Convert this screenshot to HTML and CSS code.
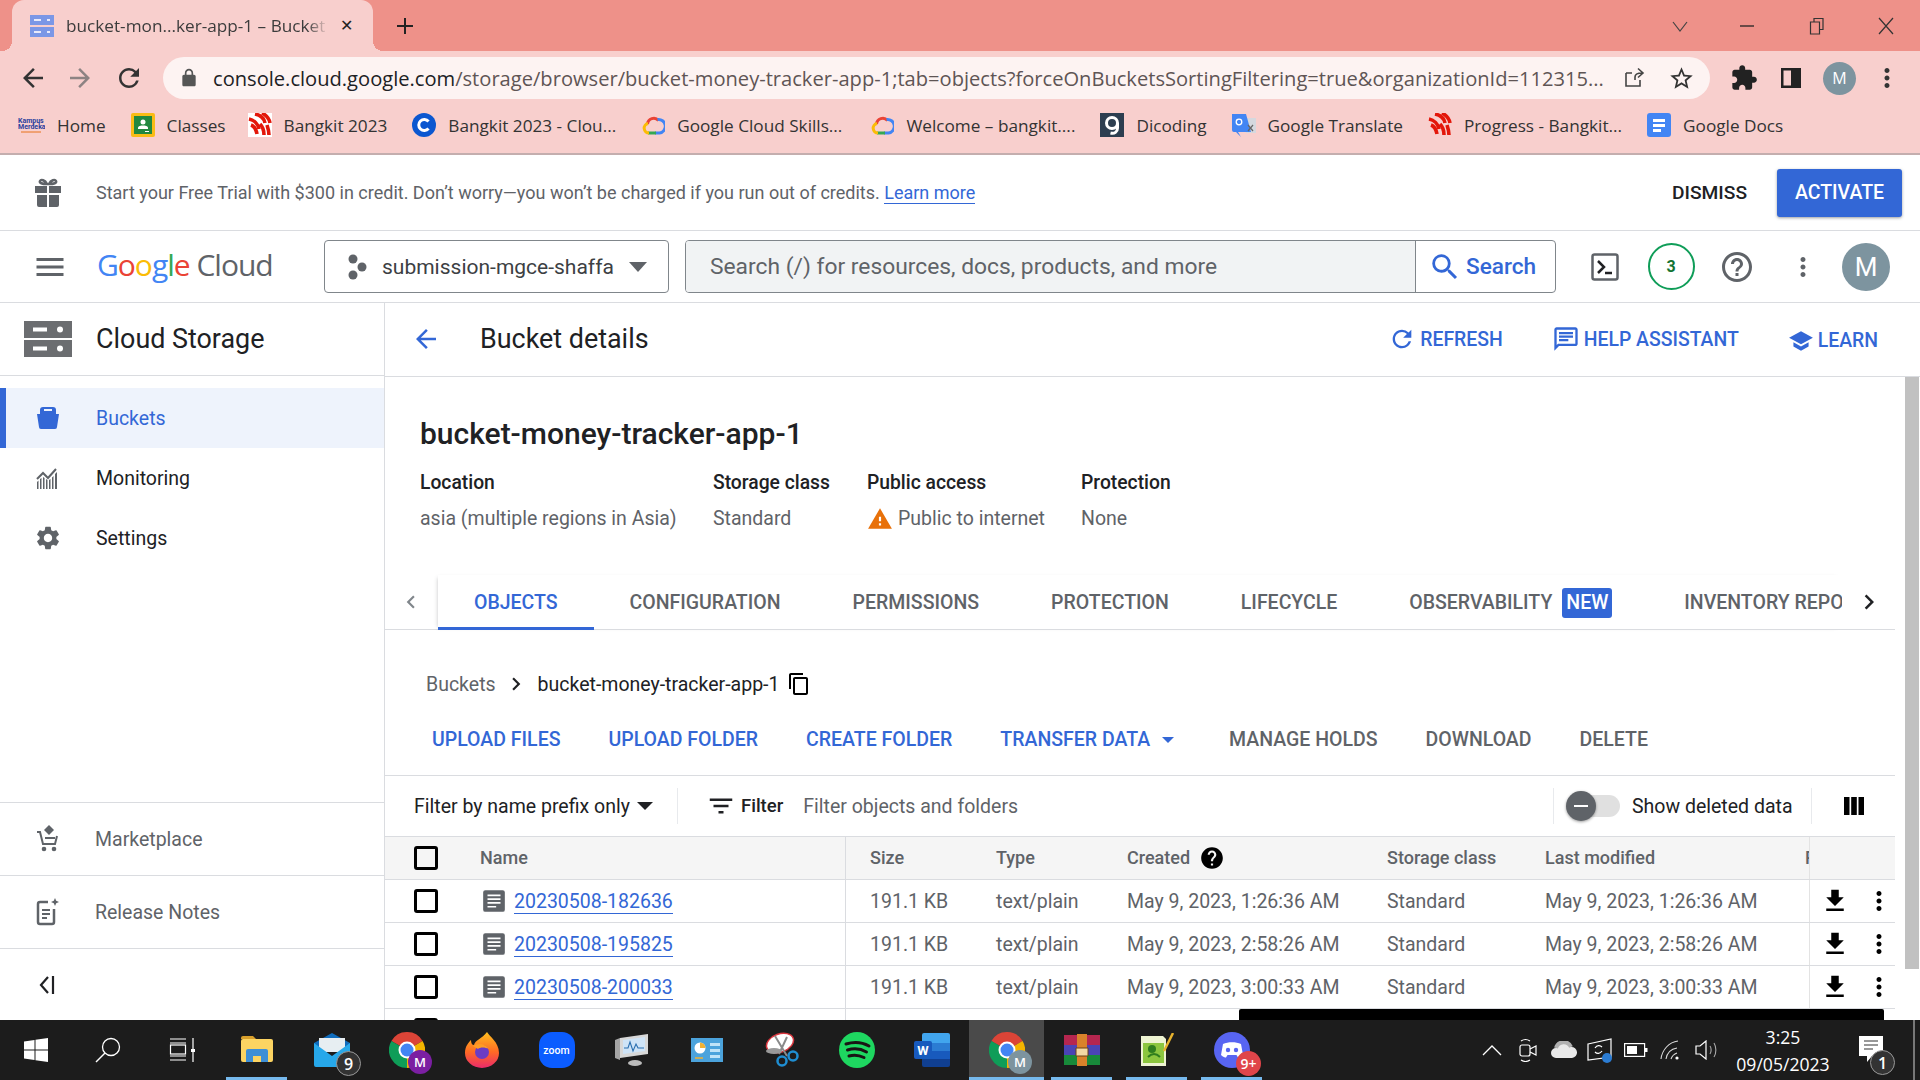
FILE: index.html
```html
<!DOCTYPE html>
<html lang="en">
<head>
    <meta charset="UTF-8">
    <title>bucket-money-tracker-app-1 – Bucket details</title>
    <link rel="stylesheet" href="styles.css">
</head>
<body>
    <svg class="defs" width="0" height="0">
        <defs>
            <symbol id="i-back" viewBox="0 0 24 24"><path d="M20 11H7.83l5.59-5.59L12 4l-8 8 8 8 1.41-1.41L7.83 13H20v-2z"/></symbol>
            <symbol id="i-more" viewBox="0 0 24 24"><path d="M12 8c1.1 0 2-.9 2-2s-.9-2-2-2-2 .9-2 2 .9 2 2 2zm0 2c-1.1 0-2 .9-2 2s.9 2 2 2 2-.9 2-2-.9-2-2-2zm0 6c-1.1 0-2 .9-2 2s.9 2 2 2 2-.9 2-2-.9-2-2-2z"/></symbol>
            <symbol id="i-refresh" viewBox="0 0 24 24"><path d="M17.65 6.35A7.958 7.958 0 0 0 12 4c-4.42 0-7.99 3.58-7.99 8s3.57 8 7.99 8c3.73 0 6.84-2.55 7.73-6h-2.08A5.99 5.99 0 0 1 12 18c-3.31 0-6-2.69-6-6s2.69-6 6-6c1.66 0 3.14.69 4.22 1.78L13 11h7V4l-2.35 2.35z"/></symbol>
            <symbol id="i-download" viewBox="0 0 24 24"><path d="M19 9h-4V3H9v6H5l7 7 7-7zM5 18v2h14v-2H5z"/></symbol>
            <symbol id="i-doc" viewBox="0 0 24 24"><path fill-rule="evenodd" d="M4 2h16a2 2 0 0 1 2 2v16a2 2 0 0 1-2 2H4a2 2 0 0 1-2-2V4a2 2 0 0 1 2-2zm2 4v1.500h12V6H6zm0 3.500V11h12V9.500H6zm0 3.500v1.500h12V13H6zm0 3.500V18h8v-1.500H6z" fill="#5f6368"/></symbol>
            <symbol id="i-chevron-right" viewBox="0 0 24 24"><path d="M10 6L8.59 7.41 13.17 12l-4.58 4.59L10 18l6-6z"/></symbol>
            <symbol id="i-chevron-left" viewBox="0 0 24 24"><path d="M15.41 7.41L14 6l-6 6 6 6 1.41-1.41L10.83 12z"/></symbol>
            <symbol id="i-storage" viewBox="0 0 48 36"><path fill="#6b6d70" d="M0 0h48v17H0zM0 19h48v17H0z"/><path fill="#fff" d="M9 6.500h14v4H9zM9 25.500h14v4H9z"/><circle cx="36" cy="8.500" r="3" fill="#fff"/><circle cx="36" cy="27.500" r="3" fill="#fff"/></symbol>
            <symbol id="i-cloud" viewBox="0 0 24 24"><g fill="none" stroke-width="3"><path stroke="#ea4335" d="M6.5 11a6.3 6.3 0 0 1 11-3.5"/><path stroke="#4285f4" d="M16.5 6.500a6.800 6.800 0 0 1 2 13.500H14"/><path stroke="#34a853" d="M15 20H7"/><path stroke="#fbbc05" d="M8 20a4.800 4.800 0 0 1-1-9.500"/></g></symbol>
            <symbol id="i-stripes" viewBox="0 0 24 24"><g fill="none" stroke="#e3170a" stroke-width="3.600"><path d="M7 1c5 1 9 4 10 9"/><path d="M14 0c4 2 7 5 8 10"/><path d="M1 6c5 1 9 5 10 10"/><path d="M3 12c3 1 5 4 6 9"/><path d="M12 11c2 2 4 6 4 11"/><path d="M19 12c1 3 2 6 2 10"/></g></symbol>
            <symbol id="i-chrome" viewBox="0 0 36 36"><path fill="#db4437" d="M18 18L2.410 9A18 18 0 0 1 33.590 9Z"/><path fill="#f4b400" d="M18 18L33.590 9A18 18 0 0 1 18 36Z"/><path fill="#0f9d58" d="M18 18L18 36A18 18 0 0 1 2.410 9Z"/><circle cx="18" cy="18" r="8.500" fill="#fff"/><circle cx="18" cy="18" r="6.500" fill="#4285f4"/></symbol>
        </defs>
    </svg>

    <div class="browser">
        <div class="tabstrip">
            <div class="browser-tab">
                <svg class="tab-favicon" width="24" height="24" viewBox="0 0 24 24"><path fill="#7b97e6" d="M0 1h24v10H0zM0 13h24v10H0z"/><path fill="#e8eafa" d="M4 5h7v2H4zM4 17h7v2H4zM17 5h3v2h-3zM17 17h3v2h-3z"/></svg>
                <span class="tab-title">bucket-mon...ker-app-1 – Bucket</span>
                <span class="tab-close">✕</span>
            </div>
            <svg class="new-tab" width="24" height="24" viewBox="0 0 24 24"><path d="M4 11h7V4h2v7h7v2h-7v7h-2v-7H4z"/></svg>
            <div class="window-controls">
                <svg class="win-chevron" width="18" height="18" viewBox="0 0 18 18"><path d="M2 5l7 9 7-9" fill="none" stroke="#444" stroke-width="1.200"/></svg>
                <svg class="win-min" width="18" height="18" viewBox="0 0 18 18"><path d="M2 9h14" stroke="#222" stroke-width="1.300"/></svg>
                <svg class="win-max" width="18" height="18" viewBox="0 0 18 18"><path d="M2.500 5h9v12h-9zM6 5V1.500h9v11h-3.500" fill="none" stroke="#333" stroke-width="1.200"/></svg>
                <svg class="win-close" width="18" height="18" viewBox="0 0 18 18"><path d="M2 1l14 16M16 1L2 17" stroke="#333" stroke-width="1.200"/></svg>
            </div>
        </div>

        <div class="toolbar">
            <svg class="nav-btn back" width="30" height="30"><use href="#i-back"/></svg>
            <svg class="nav-btn forward" width="30" height="30" viewBox="0 0 24 24"><path d="M12 4l-1.410 1.410L16.170 11H4v2h12.170l-5.580 5.590L12 20l8-8z"/></svg>
            <svg class="nav-btn reload" width="30" height="30"><use href="#i-refresh"/></svg>
            <div class="omnibox">
                <svg class="lock" width="20" height="20" viewBox="0 0 24 24"><path d="M18 8h-1V6c0-2.760-2.240-5-5-5S7 3.240 7 6v2H6c-1.100 0-2 .9-2 2v10c0 1.100.9 2 2 2h12c1.100 0 2-.9 2-2V10c0-1.100-.9-2-2-2zM9 6c0-1.660 1.340-3 3-3s3 1.340 3 3v2H9V6z"/></svg>
                <span class="url"><span class="host">console.cloud.google.com</span>/storage/browser/bucket-money-tracker-app-1;tab=objects?forceOnBucketsSortingFiltering=true&amp;organizationId=112315...</span>
                <svg class="share" width="24" height="24" viewBox="0 0 24 24"><path d="M4 7h6M4 7v13h14v-6M13 14v-3c0-3 3-4 7-4M16 2.500L21 7l-5 4.500" fill="none" stroke="#444" stroke-width="1.600"/></svg>
                <svg class="star" width="27" height="27" viewBox="0 0 24 24"><path d="M22 9.240l-7.190-.62L12 2 9.190 8.630 2 9.240l5.460 4.730L5.820 21 12 17.270 18.180 21l-1.630-7.030L22 9.240zM12 15.400l-3.760 2.270 1-4.280-3.320-2.880 4.380-.38L12 6.100l1.710 4.040 4.380.38-3.320 2.880 1 4.280L12 15.400z"/></svg>
            </div>
            <svg class="ext" width="28" height="28" viewBox="0 0 24 24"><path d="M20.500 11H19V7c0-1.100-.9-2-2-2h-4V3.500C13 2.120 11.880 1 10.500 1S8 2.120 8 3.500V5H4c-1.100 0-1.990.9-1.990 2v3.800H3.500c1.490 0 2.700 1.210 2.700 2.700s-1.210 2.700-2.700 2.700H2V20c0 1.100.9 2 2 2h3.800v-1.500c0-1.490 1.210-2.700 2.700-2.700 1.490 0 2.700 1.210 2.700 2.700V22H17c1.100 0 2-.9 2-2v-4h1.500c1.380 0 2.500-1.120 2.500-2.500S21.880 11 20.500 11z"/></svg>
            <svg class="sidepanel" width="22" height="22" viewBox="0 0 22 22"><path fill-rule="evenodd" d="M1 1h20v20H1zM3.500 3.500v15H11v-15z"/></svg>
            <span class="chrome-avatar">M</span>
            <svg class="chrome-menu" width="30" height="30"><use href="#i-more"/></svg>
        </div>

        <div class="bookmarks">
            <div class="bookmark"><svg width="27" height="24" viewBox="0 0 27 24"><text x="0" y="10" class="km-logo">Kampus</text><text x="0" y="16" class="km-logo">Merdeka</text><path d="M3 19h20" stroke="#e8731a" stroke-width="1"/></svg><span>Home</span></div>
            <div class="bookmark tight"><svg width="24" height="24" viewBox="0 0 24 24"><rect width="24" height="24" rx="2" fill="#f9bc15"/><rect x="3" y="3" width="18" height="18" fill="#22883f"/><circle cx="12" cy="9" r="2.500" fill="#fff"/><path d="M7 15c0-2 3-2.500 5-2.500s5 .5 5 2.500v1H7z" fill="#fff"/><path d="M14 18h4v1h-4z" fill="#fff"/></svg><span>Classes</span></div>
            <div class="bookmark"><svg width="24" height="24" viewBox="0 0 24 24"><rect width="24" height="24" fill="#fff"/><use href="#i-stripes"/></svg><span>Bangkit 2023</span></div>
            <div class="bookmark"><svg width="24" height="24" viewBox="0 0 24 24"><circle cx="12" cy="12" r="12" fill="#0b57d0"/><path d="M16.500 8.500a5.500 5.500 0 1 0 0 7" fill="none" stroke="#fff" stroke-width="3"/></svg><span>Bangkit 2023 - Clou...</span></div>
            <div class="bookmark loose"><svg width="24" height="24"><use href="#i-cloud"/></svg><span>Google Cloud Skills...</span></div>
            <div class="bookmark"><svg width="24" height="24"><use href="#i-cloud"/></svg><span>Welcome – bangkit....</span></div>
            <div class="bookmark"><svg width="24" height="24" viewBox="0 0 24 24"><rect width="24" height="24" fill="#2d3e50"/><circle cx="12" cy="10" r="5.500" fill="none" stroke="#fff" stroke-width="3"/><path d="M17.500 10v5c0 4-3 6-7 5" fill="none" stroke="#fff" stroke-width="3"/></svg><span>Dicoding</span></div>
            <div class="bookmark"><svg width="24" height="24" viewBox="0 0 24 24"><path d="M10 5h14v15H14z" fill="#d5d8de"/><path d="M0 1h14l5 18H6l3 5-5-5H2a2 2 0 0 1-2-2z" fill="#4285f4"/><circle cx="7" cy="9" r="2.800" fill="none" stroke="#fff" stroke-width="1.300"/><path d="M16 12l5 6M21 12l-5 6" stroke="#666" stroke-width="1.200"/></svg><span>Google Translate</span></div>
            <div class="bookmark"><svg width="24" height="24"><use href="#i-stripes"/></svg><span>Progress - Bangkit...</span></div>
            <div class="bookmark"><svg width="24" height="24" viewBox="0 0 24 24"><rect width="24" height="24" rx="3" fill="#4285f4"/><path d="M6 6h12v3H6zM6 11h12v3H6zM6 16h8v3H6z" fill="#fff"/></svg><span>Google Docs</span></div>
        </div>
    </div>

    <div class="banner">
        <svg class="gift" width="32" height="32" viewBox="0 0 32 32"><path fill="#5f6368" d="M3 9h12v7H3zM17 9h12v7H17zM5 18h10v12H7a2 2 0 0 1-2-2zM17 18h10v10a2 2 0 0 1-2 2h-8z"/><path fill="none" stroke="#5f6368" stroke-width="2.500" d="M15 7c-2-4-6-5-7-3s2 3 7 3zM17 7c2-4 6-5 7-3s-2 3-7 3z"/></svg>
        <p class="banner-text">Start your Free Trial with $300 in credit. Don’t worry—you won’t be charged if you run out of credits. <a class="underlined">Learn more</a></p>
        <span class="dismiss">DISMISS</span>
        <span class="activate">ACTIVATE</span>
    </div>

    <header class="console-header">
        <svg class="menu-icon" width="36" height="36" viewBox="0 0 24 24"><path d="M3 18h18v-2H3v2zm0-5h18v-2H3v2zm0-7v2h18V6H3z"/></svg>
        <div class="logo"><span class="g-blue">G</span><span class="g-red">o</span><span class="g-yellow">o</span><span class="g-blue">g</span><span class="g-green">l</span><span class="g-red">e</span> <span class="logo-cloud">Cloud</span></div>
        <div class="project">
            <svg width="24" height="26" viewBox="0 0 24 26"><circle cx="8" cy="5" r="4.500"/><circle cx="17" cy="13" r="4.500"/><circle cx="8" cy="21" r="4.500"/></svg>
            <span class="project-name">submission-mgce-shaffa</span>
            <span class="caret"></span>
        </div>
        <div class="search">
            <span class="search-input">Search (/) for resources, docs, products, and more</span>
            <span class="search-btn">
                <svg width="34" height="34" viewBox="0 0 24 24"><path d="M15.500 14h-.79l-.28-.27A6.471 6.471 0 0 0 16 9.500 6.500 6.500 0 1 0 9.500 16c1.610 0 3.090-.59 4.230-1.570l.27.28v.79l5 4.990L20.490 19l-4.990-5zm-6 0C7.010 14 5 11.990 5 9.500S7.010 5 9.500 5 14 7.010 14 9.500 11.990 14 9.500 14z"/></svg>
                Search
            </span>
        </div>
        <div class="header-icons">
            <span class="header-icon"><svg width="30" height="30" viewBox="0 0 30 30"><rect x="2.500" y="2.500" width="25" height="25" rx="2" fill="none" stroke="#5f6368" stroke-width="2.500"/><path d="M8 9l6 6-6 6" fill="none" stroke="#202124" stroke-width="2.500"/><path d="M15 21h7" stroke="#202124" stroke-width="2.500"/></svg></span>
            <span class="header-icon"><span class="notif">3</span></span>
            <span class="header-icon"><svg width="36" height="36" viewBox="0 0 24 24" fill="#5f6368"><path d="M11 18h2v-2h-2v2zm1-16C6.480 2 2 6.480 2 12s4.480 10 10 10 10-4.480 10-10S17.520 2 12 2zm0 18c-4.410 0-8-3.590-8-8s3.590-8 8-8 8 3.590 8 8-3.590 8-8 8zm0-14c-2.210 0-4 1.790-4 4h2c0-1.100.9-2 2-2s2 .9 2 2c0 2-3 1.750-3 5h2c0-2.250 3-2.500 3-5 0-2.210-1.790-4-4-4z"/></svg></span>
            <span class="header-icon"><svg width="30" height="30" fill="#5f6368"><use href="#i-more"/></svg></span>
            <span class="avatar">M</span>
        </div>
    </header>

    <div class="layout">
        <aside class="sidebar">
            <div class="side-title">
                <svg width="48" height="36"><use href="#i-storage"/></svg>
                <span>Cloud Storage</span>
            </div>
            <nav class="side-nav">
                <div class="side-item active">
                    <svg width="24" height="24" viewBox="0 0 24 24"><path d="M7 1h10a3 3 0 0 1 3 3v4H4V4a3 3 0 0 1 3-3z"/><path fill="#eef3fc" d="M8 3h8v2H8z"/><path d="M1 8h22l-2 13a2 2 0 0 1-2 2H5a2 2 0 0 1-2-2z"/></svg>
                    <span>Buckets</span>
                </div>
                <div class="side-item">
                    <svg width="24" height="24" viewBox="0 0 24 24"><path d="M1 23v-7l1.500-1.500V23zM4 23v-10l1.500-1V23zM7 23v-12l1.500 1V23zM10 23V13l1.500 1V23zM13 23v-9l1.500-1V23zM16 23V11.500l1.500-1.500V23zM19 23V8l2-2V23z"/><path d="M1 13l6-6 5 5 8-9" fill="none" stroke="#5f6368" stroke-width="2"/></svg>
                    <span>Monitoring</span>
                </div>
                <div class="side-item">
                    <svg width="28" height="28" viewBox="0 0 24 24"><path d="M19.140 12.940c.04-.3.06-.61.06-.94 0-.32-.02-.64-.07-.94l2.030-1.580a.49.49 0 0 0 .12-.61l-1.920-3.320a.488.488 0 0 0-.59-.22l-2.390.96c-.5-.38-1.030-.7-1.620-.94l-.36-2.540a.484.484 0 0 0-.48-.41h-3.840c-.24 0-.43.17-.47.41l-.36 2.540c-.59.24-1.130.57-1.620.94l-2.390-.96c-.22-.08-.47 0-.59.22L2.740 8.870c-.12.21-.08.47.12.61l2.030 1.580c-.05.3-.09.63-.09.94s.02.64.07.94l-2.030 1.580a.49.49 0 0 0-.12.61l1.920 3.320c.12.22.37.29.59.22l2.390-.96c.5.38 1.030.7 1.620.94l.36 2.540c.05.24.24.41.48.41h3.840c.24 0 .44-.17.47-.41l.36-2.540c.59-.24 1.130-.56 1.620-.94l2.390.96c.22.08.47 0 .59-.22l1.920-3.320c.12-.22.07-.47-.12-.61l-2.010-1.580zM12 15.600c-1.980 0-3.600-1.620-3.600-3.600s1.620-3.600 3.600-3.600 3.600 1.620 3.600 3.600-1.620 3.600-3.600 3.600z"/></svg>
                    <span>Settings</span>
                </div>
            </nav>
            <div class="side-foot">
                <div class="foot-item">
                    <svg width="24" height="28" viewBox="0 0 24 28"><path d="M13 0l5 5-5 5-5-5z"/><path d="M1 7h3l3 12h12l2-8" fill="none" stroke="#5f6368" stroke-width="2"/><circle cx="8" cy="24" r="2.300"/><circle cx="18" cy="24" r="2.300"/><path d="M9 12h10v2H9z"/></svg>
                    <span>Marketplace</span>
                </div>
                <div class="foot-item">
                    <svg width="24" height="28" viewBox="0 0 24 28"><path d="M12 4H4a2 2 0 0 0-2 2v18a2 2 0 0 0 2 2h12a2 2 0 0 0 2-2V11" fill="none" stroke="#5f6368" stroke-width="2.500"/><path d="M6 11h8v2H6zM6 15h8v2H6zM6 19h5v2H6zM19 0l1.200 2.800L23 4l-2.800 1.200L19 8l-1.200-2.800L15 4l2.800-1.200z"/></svg>
                    <span>Release Notes</span>
                </div>
                <div class="foot-item collapse">
                    <svg width="20" height="22" viewBox="0 0 20 22"><path d="M10 3L3 11l7 8" fill="none" stroke="#202124" stroke-width="2.200"/><path d="M15 2v18" stroke="#202124" stroke-width="2.200"/></svg>
                </div>
            </div>
        </aside>

        <main class="main">
            <div class="page-head">
                <svg class="head-back" width="30" height="30"><use href="#i-back"/></svg>
                <h2 class="page-title">Bucket details</h2>
                <div class="head-actions">
                    <span class="head-action"><svg width="28" height="28"><use href="#i-refresh"/></svg>REFRESH</span>
                    <span class="head-action"><svg width="28" height="28" viewBox="0 0 24 24"><path d="M20 2H4c-1.100 0-2 .9-2 2v18l4-4h14c1.100 0 2-.9 2-2V4c0-1.100-.9-2-2-2zm0 14H5.170L4 17.170V4h16v12zM6 12h8v2H6zm0-3h12v2H6zm0-3h12v2H6z"/></svg>HELP ASSISTANT</span>
                    <span class="head-action learn"><svg width="26" height="26" viewBox="0 0 24 24"><path d="M5 13.180v4L12 21l7-3.820v-4L12 17l-7-3.820zM12 3L1 9l11 6 11-6L12 3z"/></svg>LEARN</span>
                </div>
            </div>

            <div class="main-body">
                <div class="scroll">
                    <h1 class="bucket-name">bucket-money-tracker-app-1</h1>
                    <div class="meta">
                        <div class="meta-col col-location"><b>Location</b><span>asia (multiple regions in Asia)</span></div>
                        <div class="meta-col col-class"><b>Storage class</b><span>Standard</span></div>
                        <div class="meta-col col-access"><b>Public access</b><span class="public"><svg width="26" height="26" viewBox="0 0 24 24"><path fill="#e8710a" d="M1 21h22L12 2 1 21zm12-3h-2v-2h2v2zm0-4h-2v-4h2v4z"/></svg>Public to internet</span></div>
                        <div class="meta-col"><b>Protection</b><span>None</span></div>
                    </div>

                    <div class="tabs">
                        <span class="tab-arrow left"><svg width="26" height="26"><use href="#i-chevron-left"/></svg></span>
                        <div class="tab-list">
                            <span class="tab active">OBJECTS</span>
                            <span class="tab">CONFIGURATION</span>
                            <span class="tab">PERMISSIONS</span>
                            <span class="tab">PROTECTION</span>
                            <span class="tab">LIFECYCLE</span>
                            <span class="tab">OBSERVABILITY<em class="new-badge">NEW</em></span>
                            <span class="tab">INVENTORY REPORTS</span>
                        </div>
                        <span class="tab-arrow right"><svg width="30" height="30"><use href="#i-chevron-right"/></svg></span>
                    </div>

                    <div class="crumbs">
                        <span class="crumb-root">Buckets</span>
                        <svg width="26" height="26"><use href="#i-chevron-right"/></svg>
                        <span class="crumb-name">bucket-money-tracker-app-1</span>
                        <svg width="24" height="24" viewBox="0 0 24 24"><path d="M16 1H4c-1.100 0-2 .9-2 2v14h2V3h12V1zm3 4H8c-1.100 0-2 .9-2 2v14c0 1.100.9 2 2 2h11c1.100 0 2-.9 2-2V7c0-1.100-.9-2-2-2zm0 16H8V7h11v14z"/></svg>
                    </div>

                    <div class="actions">
                        <span class="action">UPLOAD FILES</span>
                        <span class="action">UPLOAD FOLDER</span>
                        <span class="action">CREATE FOLDER</span>
                        <span class="action transfer">TRANSFER DATA<i class="action-caret"></i></span>
                        <span class="action off">MANAGE HOLDS</span>
                        <span class="action off">DOWNLOAD</span>
                        <span class="action off">DELETE</span>
                    </div>

                    <div class="filter-bar">
                        <span class="prefix">Filter by name prefix only<i class="caret small"></i></span>
                        <span class="vsep"></span>
                        <svg class="filter-icon" width="30" height="30" viewBox="0 0 24 24"><path d="M10 18h4v-2h-4v2zM3 6v2h18V6H3zm3 7h12v-2H6v2z"/></svg>
                        <b class="filter-word">Filter</b>
                        <span class="filter-input">Filter objects and folders</span>
                        <span class="vsep"></span>
                        <span class="toggle"><span class="toggle-knob"></span></span>
                        <span class="toggle-label">Show deleted data</span>
                        <span class="vsep"></span>
                        <svg class="columns-icon" width="20" height="18" viewBox="0 0 20 18"><path d="M0 0h5.500v18H0zM7.200 0h5.600v18H7.200zM14.500 0H20v18h-5.500z"/></svg>
                    </div>

                    <div class="row row-head">
                        <div class="cell"><span class="checkbox"></span></div>
                        <div class="cell">Name</div>
                        <div class="cell sep">Size</div>
                        <div class="cell">Type</div>
                        <div class="cell">Created<svg class="created-help" width="26" height="26" viewBox="0 0 24 24"><path d="M12 2C6.480 2 2 6.480 2 12s4.480 10 10 10 10-4.480 10-10S17.520 2 12 2zm1 17h-2v-2h2v2zm2.070-7.750l-.9.92C13.450 12.900 13 13.500 13 15h-2v-.5c0-1.100.45-2.100 1.170-2.830l1.240-1.260c.37-.36.59-.86.59-1.410 0-1.100-.9-2-2-2s-2 .9-2 2H8c0-2.210 1.790-4 4-4s4 1.790 4 4c0 .88-.36 1.680-.93 2.250z"/></svg></div>
                        <div class="cell">Storage class</div>
                        <div class="cell">Last modified</div>
                        <div class="cell cut">Public access</div>
                        <div class="cell fixed"></div>
                    </div>
                    <div class="row">
                        <div class="cell"><span class="checkbox"></span></div>
                        <div class="cell name"><svg width="26" height="26"><use href="#i-doc"/></svg><a class="underlined">20230508-182636</a></div>
                        <div class="cell sep">191.1 KB</div>
                        <div class="cell">text/plain</div>
                        <div class="cell">May 9, 2023, 1:26:36 AM</div>
                        <div class="cell">Standard</div>
                        <div class="cell">May 9, 2023, 1:26:36 AM</div>
                        <div class="cell cut"></div>
                        <div class="cell fixed"><svg width="30" height="30"><use href="#i-download"/></svg><svg width="30" height="30"><use href="#i-more"/></svg></div>
                    </div>
                    <div class="row">
                        <div class="cell"><span class="checkbox"></span></div>
                        <div class="cell name"><svg width="26" height="26"><use href="#i-doc"/></svg><a class="underlined">20230508-195825</a></div>
                        <div class="cell sep">191.1 KB</div>
                        <div class="cell">text/plain</div>
                        <div class="cell">May 9, 2023, 2:58:26 AM</div>
                        <div class="cell">Standard</div>
                        <div class="cell">May 9, 2023, 2:58:26 AM</div>
                        <div class="cell cut"></div>
                        <div class="cell fixed"><svg width="30" height="30"><use href="#i-download"/></svg><svg width="30" height="30"><use href="#i-more"/></svg></div>
                    </div>
                    <div class="row">
                        <div class="cell"><span class="checkbox"></span></div>
                        <div class="cell name"><svg width="26" height="26"><use href="#i-doc"/></svg><a class="underlined">20230508-200033</a></div>
                        <div class="cell sep">191.1 KB</div>
                        <div class="cell">text/plain</div>
                        <div class="cell">May 9, 2023, 3:00:33 AM</div>
                        <div class="cell">Standard</div>
                        <div class="cell">May 9, 2023, 3:00:33 AM</div>
                        <div class="cell cut"></div>
                        <div class="cell fixed"><svg width="30" height="30"><use href="#i-download"/></svg><svg width="30" height="30"><use href="#i-more"/></svg></div>
                    </div>
                    <div class="row">
                        <div class="cell"><span class="checkbox"></span></div>
                        <div class="cell"></div>
                        <div class="cell sep"></div>
                    </div>
                    <div class="snackbar"></div>
                </div>
                <div class="scrollbar"><div class="thumb"></div></div>
            </div>
        </main>
    </div>

    <footer class="taskbar">
        <div class="task-sys">
            <svg width="24" height="24" viewBox="0 0 24 24" fill="#fff"><path d="M0 3.500L10.500 2v9.500H0zM11.500 1.800L24 0v11.500H11.500zM0 12.500h10.500V22L0 20.500zM11.500 12.500H24V24l-12.500-1.800z"/></svg>
        </div>
        <div class="task-sys">
            <svg width="26" height="26" viewBox="0 0 26 26"><circle cx="16" cy="10" r="8.500" fill="none" stroke="#fff" stroke-width="1.300"/><path d="M10 16L1 25" stroke="#fff" stroke-width="1.500"/></svg>
        </div>
        <div class="task-sys">
            <svg width="26" height="24" viewBox="0 0 26 24"><path d="M1 1h16M1 5h16M1 18h16M1 22h16M24 0v24" stroke="#fff" stroke-width="1.200"/><rect x="1.500" y="7" width="15" height="9" fill="none" stroke="#fff" stroke-width="1.200"/><rect x="22" y="11" width="4" height="3" fill="#fff"/></svg>
        </div>
        <div class="task-app open">
            <svg width="32" height="28" viewBox="0 0 32 28"><path d="M0 2a2 2 0 0 1 2-2h10l3 3H0z" fill="#d9a02c"/><rect y="3" width="32" height="23" rx="2" fill="#fcd462"/><path d="M5 26V15a2 2 0 0 1 2-2h18a2 2 0 0 1 2 2v11h-7v-6h-8v6z" fill="#3e8fd6"/></svg>
        </div>
        <div class="task-app">
            <svg width="36" height="34" viewBox="0 0 36 34"><path d="M0 10L18 0l18 10v6H0z" fill="#0f6cbd"/><path d="M5 5h26v14H5z" fill="#e7eef2"/><path d="M0 10l18 13 18-13v22a2 2 0 0 1-2 2H2a2 2 0 0 1-2-2z" fill="#27a8ea"/></svg>
            <span class="task-badge">9</span>
        </div>
        <div class="task-app">
            <svg width="36" height="36"><use href="#i-chrome"/></svg>
            <span class="task-avatar purple">M</span>
        </div>
        <div class="task-app">
            <svg width="34" height="36" viewBox="0 0 34 36"><defs><linearGradient id="fx" x1="0" y1="0" x2="0" y2="1"><stop offset="0" stop-color="#ffc01e"/><stop offset=".55" stop-color="#ff6a24"/><stop offset="1" stop-color="#ea2a6b"/></linearGradient></defs><path d="M22 0c2 4 12 10 12 21a17 15 0 0 1-34 0C0 14 4 10 6 8c0 3 1 5 3 5 1-5 8-6 13-13z" fill="url(#fx)"/><circle cx="17" cy="20" r="7" fill="#6b3cc4"/><path d="M8 14c4-3 12-3 16 3-4-2-9-2-11 0z" fill="#ff9c24"/></svg>
        </div>
        <div class="task-app">
            <span class="zoom-icon">zoom</span>
        </div>
        <div class="task-app">
            <svg width="34" height="32" viewBox="0 0 34 32"><path d="M5 4l28-4v20L5 24z" fill="#d8d8d8"/><path d="M8 6l22-3v14L8 20z" fill="#cfe4f7"/><path d="M9 14l4 0 2-6 3 9 3-7 2 4h6" fill="none" stroke="#2a6fb0" stroke-width="1.100"/><path d="M0 6l5-2v22l-5-2z" fill="#a4a4a4"/><ellipse cx="20" cy="29" rx="7" ry="3" fill="#bbb"/></svg>
        </div>
        <div class="task-app">
            <svg width="32" height="24" viewBox="0 0 32 24"><rect width="32" height="24" fill="#4ba3dc"/><circle cx="9" cy="10" r="5.500" fill="#fff"/><path d="M9 10V4.500a5.500 5.500 0 0 1 5.500 5.500z" fill="#f2b233"/><path d="M19 5h10v3H19zM19 11h10v3H19zM19 17h10v3H19z" fill="#bfe3f8"/><path d="M4 20h8" stroke="#f2b233" stroke-width="1.500"/></svg>
        </div>
        <div class="task-app">
            <svg width="34" height="36" viewBox="0 0 34 36"><ellipse cx="15" cy="11" rx="14" ry="9" fill="#fff" stroke="#d9363e" stroke-width="1.500" transform="rotate(-20 15 11)"/><path d="M10 4l12 20M22 5L14 22" stroke="#8a8a8a" stroke-width="2"/><ellipse cx="9" cy="19" rx="8" ry="3" fill="#999"/><circle cx="17" cy="29" r="4.500" fill="none" stroke="#1f8ed2" stroke-width="2.500"/><circle cx="28" cy="24" r="4.500" fill="none" stroke="#1f8ed2" stroke-width="2.500"/></svg>
        </div>
        <div class="task-app">
            <svg width="36" height="36" viewBox="0 0 36 36"><circle cx="18" cy="18" r="18" fill="#1ed760"/><path d="M7 12c8-2.500 16-2 23 2M8.500 18c6.500-2 13-1.500 19 2M10 24c5-1.500 10-1 15 1.500" fill="none" stroke="#191414" stroke-width="3" stroke-linecap="round"/></svg>
        </div>
        <div class="task-app">
            <svg width="36" height="34" viewBox="0 0 36 34"><path d="M8 2a2 2 0 0 1 2-2h24a2 2 0 0 1 2 2v8H8z" fill="#41a5ee"/><path d="M8 10h28v8H8z" fill="#2b7cd3"/><path d="M8 18h28v8H8z" fill="#185abd"/><path d="M8 26h28v6a2 2 0 0 1-2 2H10a2 2 0 0 1-2-2z" fill="#103f91"/><rect y="8" width="18" height="18" rx="2" fill="#185abd"/><text x="9" y="22" class="word-w">W</text></svg>
        </div>
        <div class="task-app open active">
            <svg width="36" height="36"><use href="#i-chrome"/></svg>
            <span class="task-avatar grey">M</span>
        </div>
        <div class="task-app open">
            <svg width="36" height="32" viewBox="0 0 36 32"><path d="M0 1h36v10H0z" fill="#b5264f"/><path d="M0 11h36v10H0z" fill="#4a44b5"/><path d="M0 21h36v10H0z" fill="#188a3a"/><path d="M13 0h10v32H13z" fill="#d9822b"/><path d="M12 14h12v8H12z" fill="#f3d9a4" stroke="#6b4216"/></svg>
        </div>
        <div class="task-app open">
            <svg width="34" height="34" viewBox="0 0 34 34"><path d="M1 3h22l3 3v27H1z" fill="#eef3d2"/><path d="M3 10h21v20H3z" fill="#8cc63f"/><circle cx="12" cy="16" r="4" fill="#2f7d1e"/><path d="M8 24c4-4 8-4 12 0" fill="none" stroke="#2f7d1e" stroke-width="2"/><path d="M24 18L33 0" stroke="#e7b32e" stroke-width="2.500"/></svg>
        </div>
        <div class="task-app open">
            <svg width="36" height="36" viewBox="0 0 36 36"><circle cx="18" cy="18" r="18" fill="#5865f2"/><path d="M9 12c5-2.500 13-2.500 18 0l2 11c-2 2-4 2.500-5 2.500l-1.500-2.500h-9L12 25.500c-1 0-3-.5-5-2.500z" fill="#fff"/><circle cx="14" cy="18" r="2.200" fill="#5865f2"/><circle cx="22" cy="18" r="2.200" fill="#5865f2"/></svg>
            <span class="task-badge red">9+</span>
        </div>

        <div class="tray">
            <span class="tray-icon"><svg width="20" height="12" viewBox="0 0 20 12"><path d="M1 11l9-9 9 9" fill="none" stroke="#fff" stroke-width="1.300"/></svg></span>
            <span class="tray-icon"><svg width="18" height="24" viewBox="0 0 18 24"><rect x="1" y="7" width="10" height="11" rx="2" fill="none" stroke="#fff" stroke-width="1.200"/><path d="M11 11l6-3v9l-6-3M2 3c3-2 6-2 9 0M2 22c3 2 6 2 9 0" fill="none" stroke="#fff" stroke-width="1.200"/></svg></span>
            <span class="tray-icon"><svg width="26" height="18" viewBox="0 0 26 18"><path d="M5 17a5 5 0 0 1 0-10 8 8 0 0 1 15-1 5.500 5.500 0 0 1 1 11z" fill="#e9e9e9"/><path d="M5 7a8 8 0 0 1 15-1" fill="none" stroke="#b0b0b0" stroke-width="4"/></svg></span>
            <span class="tray-icon"><svg width="26" height="26" viewBox="0 0 26 26"><path d="M1 7l23-5v18L1 23z" fill="none" stroke="#fff" stroke-width="1.200"/><path d="M8 11c2-3 5-3 7-1M15 14c-2 3-5 3-7 1" fill="none" stroke="#fff" stroke-width="1.200"/><circle cx="20" cy="21" r="5" fill="#2b7cd3"/></svg></span>
            <span class="tray-icon"><svg width="24" height="14" viewBox="0 0 24 14"><rect x=".6" y=".6" width="20" height="12.800" fill="none" stroke="#fff" stroke-width="1.200"/><rect x="3" y="3" width="10" height="8" fill="#fff"/><rect x="21" y="5" width="2.500" height="4" fill="#fff"/></svg></span>
            <span class="tray-icon"><svg width="22" height="20" viewBox="0 0 22 20"><path d="M1 19C2 10 9 2 18 1M6 19c1-6 5-10 11-11M11 19c1-3 3-5 6-6" fill="none" stroke="#ddd" stroke-width="1.100"/><circle cx="17" cy="18" r="1.600" fill="#fff"/></svg></span>
            <span class="tray-icon"><svg width="24" height="20" viewBox="0 0 24 20"><path d="M1 6h4l6-5v18l-6-5H1z" fill="none" stroke="#fff" stroke-width="1.200"/><path d="M15 6c1.500 2 1.500 6 0 8M19 3c2.500 4 2.500 10 0 14" fill="none" stroke="#aaa" stroke-width="1.100"/></svg></span>
            <div class="clock"><span>3:25</span><span>09/05/2023</span></div>
            <div class="notify">
                <svg width="24" height="28" viewBox="0 0 24 28"><path d="M0 0h24v20H13l-5 6v-6H0z" fill="#fff"/><path d="M5 5h14M5 9h14M5 13h9" stroke="#333" stroke-width="1.200"/></svg>
                <span class="task-badge notify-badge">1</span>
            </div>
            <span class="desk-peek"></span>
        </div>
    </footer>
</body>
</html>
```

FILE: styles.css
```css
* {
    box-sizing: border-box;
}

html, body {
    margin: 0;
    width: 1920px;
    height: 1080px;
    overflow: hidden;
}

body {
    display: flex;
    flex-direction: column;
    font-family: Roboto, sans-serif;
    font-size: 19.5px;
    color: #202124;
    background: #fff;
}

.defs {
    position: absolute;
}

svg {
    flex: none;
    display: block;
}

h1, h2, p {
    margin: 0;
    font-weight: 400;
}

.underlined {
    color: #3367d6;
    border-bottom: 1px solid #3367d6;
    line-height: 22px;
}

/* browser chrome */
.browser {
    height: 155px;
    flex: none;
    background: #f8cfcd;
    border-bottom: 2px solid #c4aeae;
    font-family: "Open Sans", sans-serif;
}

.tabstrip {
    height: 51px;
    display: flex;
    align-items: center;
    padding-left: 12px;
    background: #ee9189;
}

.browser-tab {
    position: relative;
    width: 361px;
    height: 51px;
    display: flex;
    align-items: center;
    padding-left: 18px;
    border-radius: 12px 12px 0 0;
    background: #f8cfcd;
}

.browser-tab::before, .browser-tab::after {
    content: "";
    position: absolute;
    bottom: 0;
    width: 10px;
    height: 10px;
    background: radial-gradient(circle at 0 0, #ee9189 10px, #f8cfcd 10px);
}

.browser-tab::before {
    left: -10px;
}

.browser-tab::after {
    right: -10px;
    background: radial-gradient(circle at 100% 0, #ee9189 10px, #f8cfcd 10px);
}

.tab-title {
    width: 262px;
    margin-left: 12px;
    font-size: 17.2px;
    color: #3c3c3c;
    white-space: nowrap;
    overflow: hidden;
    -webkit-mask-image: linear-gradient(to right, #000 92%, transparent);
    mask-image: linear-gradient(to right, #000 92%, transparent);
}

.tab-close {
    margin-left: 12px;
    font-size: 16px;
    font-weight: 700;
    color: #222;
    font-family: "DejaVu Sans", sans-serif;
}

.new-tab {
    margin-left: 20px;
    fill: #222;
}

.window-controls {
    margin-left: auto;
    display: flex;
    align-items: center;
    width: 249px;
}

.win-chevron {
    margin-right: 49px;
}

.win-min {
    margin-right: 52px;
}

.win-max {
    margin-right: 51px;
}

.toolbar {
    height: 54px;
    display: flex;
    align-items: center;
    padding-left: 18px;
}

.nav-btn {
    fill: #333;
}

.back {
    margin-right: 17px;
}

.forward {
    margin-right: 19px;
    fill: #8d8383;
}

.reload {
    margin-right: 19px;
}

.omnibox {
    width: 1547px;
    height: 42px;
    display: flex;
    align-items: center;
    padding-left: 16px;
    border-radius: 21px;
    background: #fdf3f2;
    font-size: 20.12px;
}

.lock {
    fill: #555;
}

.url {
    width: 1394px;
    margin-left: 14px;
    margin-right: 15px;
    white-space: nowrap;
    overflow: hidden;
    color: #5f5555;
}

.host {
    color: #202124;
}

.share {
    margin-right: 22px;
}

.star {
    fill: #333;
}

.ext {
    margin-left: 20px;
    fill: #222;
}

.sidepanel {
    margin-left: 22px;
    fill: #222;
}

.chrome-avatar {
    width: 33px;
    height: 33px;
    margin-left: 21px;
    display: flex;
    align-items: center;
    justify-content: center;
    border-radius: 50%;
    background: #7d949f;
    color: #fff;
    font-size: 16px;
}

.chrome-menu {
    margin-left: 16px;
    fill: #333;
}

.bookmarks {
    height: 48px;
    display: flex;
    align-items: center;
    gap: 25px;
    padding: 0 0 8px 18px;
}

.bookmark {
    display: flex;
    align-items: center;
    gap: 12px;
    font-size: 17.2px;
    color: #333;
    white-space: nowrap;
}

.bookmark.tight {
    margin-right: -3px;
}

.bookmark.loose {
    margin-right: 3px;
}

.km-logo {
    font: 700 7px Roboto, sans-serif;
    fill: #2b3f9e;
}

/* trial banner */
.banner {
    height: 76px;
    flex: none;
    display: flex;
    align-items: center;
    padding: 0 18px 0 32px;
    border-bottom: 1px solid #dadce0;
}

.banner-text {
    margin-left: 32px;
    flex: 1;
    font-size: 18px;
    color: #5f6368;
}

.dismiss {
    font-weight: 500;
    font-size: 19.2px;
    margin-right: 30px;
}

.activate {
    width: 125px;
    height: 48px;
    display: flex;
    align-items: center;
    justify-content: center;
    border-radius: 3px;
    background: #3367d6;
    color: #fff;
    font-weight: 500;
    box-shadow: 0 1px 3px rgba(60, 64, 67, .5);
}

/* console header */
.console-header {
    height: 72px;
    flex: none;
    display: flex;
    align-items: center;
    padding-left: 32px;
    border-bottom: 1px solid #dadce0;
}

.menu-icon {
    fill: #5f6368;
}

.logo {
    width: 227px;
    margin-left: 29px;
    padding-bottom: 4px;
    font-family: "Open Sans", sans-serif;
    font-size: 30px;
    letter-spacing: -1px;
    white-space: nowrap;
}

.g-blue { color: #4285f4; }
.g-red { color: #ea4335; }
.g-yellow { color: #fbbc05; }
.g-green { color: #34a853; }

.logo-cloud {
    color: #5f6368;
}

.project {
    width: 345px;
    height: 53px;
    margin-right: 16px;
    display: flex;
    align-items: center;
    padding: 0 21px 0 20px;
    border: 1px solid #80868b;
    border-radius: 4px;
    fill: #5f6368;
}

.project-name {
    margin-left: 13px;
    flex: 1;
    font-size: 21px;
    color: #3c4043;
}

.caret {
    width: 0;
    height: 0;
    border-left: 9px solid transparent;
    border-right: 9px solid transparent;
    border-top: 10px solid #5f6368;
}

.caret.small {
    display: inline-block;
    margin-left: 7px;
    vertical-align: 3px;
    border-left-width: 8px;
    border-right-width: 8px;
    border-top-width: 8px;
    border-top-color: #202124;
}

.search {
    width: 871px;
    height: 53px;
    display: flex;
    border: 1px solid #80868b;
    border-radius: 4px;
    overflow: hidden;
}

.search-input {
    width: 730px;
    display: flex;
    align-items: center;
    padding-left: 24px;
    background: #f1f3f4;
    border-right: 1px solid #80868b;
    color: #5f6368;
    font-size: 22.8px;
}

.search-btn {
    flex: 1;
    display: flex;
    align-items: center;
    gap: 4px;
    padding-left: 12px;
    color: #3367d6;
    fill: #3367d6;
    font-size: 22.6px;
    font-weight: 500;
}

.header-icons {
    display: flex;
    align-items: center;
    padding-left: 16px;
}

.header-icon {
    width: 66px;
    display: flex;
    justify-content: center;
}

.notif {
    width: 47px;
    height: 47px;
    display: flex;
    align-items: center;
    justify-content: center;
    border: 2.500px solid #0f9d58;
    border-radius: 50%;
    font-weight: 700;
    font-size: 16px;
    color: #137333;
}

.avatar {
    width: 48px;
    height: 48px;
    margin-left: 6px;
    display: flex;
    align-items: center;
    justify-content: center;
    border-radius: 50%;
    background: #7d949f;
    color: #fff;
    font-size: 26px;
}

/* page layout */
.layout {
    flex: 1;
    min-height: 0;
    display: flex;
}

.sidebar {
    width: 385px;
    flex: none;
    display: flex;
    flex-direction: column;
    border-right: 1px solid #dadce0;
}

.side-title {
    height: 73px;
    flex: none;
    display: flex;
    align-items: center;
    gap: 24px;
    padding-left: 24px;
    border-bottom: 1px solid #dadce0;
    font-size: 26.9px;
}

.side-nav {
    flex: 1;
    padding-top: 12px;
}

.side-item {
    height: 60px;
    display: flex;
    align-items: center;
    fill: #5f6368;
}

.side-item svg {
    margin-left: 36px;
    margin-right: 36px;
}

.side-item svg[width="28"] {
    margin-left: 34px;
    margin-right: 34px;
}

.side-item.active {
    background: #eef3fc;
    border-left: 6px solid #3367d6;
    color: #3367d6;
    fill: #3367d6;
}

.side-item.active svg {
    margin-left: 30px;
}

.side-foot {
    height: 218px;
    flex: none;
}

.foot-item {
    height: 73px;
    display: flex;
    align-items: center;
    gap: 35px;
    padding-left: 36px;
    border-top: 1px solid #dadce0;
    color: #5f6368;
    fill: #5f6368;
}

.foot-item.collapse {
    height: 72px;
    padding-left: 38px;
}

.main {
    flex: 1;
    min-width: 0;
    display: flex;
    flex-direction: column;
}

.page-head {
    height: 74px;
    flex: none;
    display: flex;
    align-items: center;
    padding: 0 42px 1px 26px;
    border-bottom: 1px solid #dadce0;
}

.head-back {
    fill: #3367d6;
}

.page-title {
    margin-left: 39px;
    font-size: 26.9px;
}

.head-actions {
    margin-left: auto;
    display: flex;
    align-items: center;
    gap: 49px;
    color: #3367d6;
    fill: #3367d6;
    font-weight: 500;
    font-size: 19.4px;
}

.head-action {
    display: flex;
    align-items: center;
    gap: 4px;
}

.learn {
    margin-top: 3px;
}

.main-body {
    flex: 1;
    min-height: 0;
    display: flex;
}

.scroll {
    position: relative;
    flex: 1;
    min-width: 0;
    margin-right: 10px;
    overflow: hidden;
}

.scrollbar {
    width: 14px;
    flex: none;
    margin-right: 1px;
}

.thumb {
    height: 592px;
    background: #c1c1c1;
}

.bucket-name {
    margin: 37px 0 0 35px;
    font-size: 30px;
    line-height: 40px;
    font-weight: 500;
}

.meta {
    display: flex;
    margin: 11px 0 0 35px;
}

.meta-col {
    display: flex;
    flex-direction: column;
}

.meta-col b {
    line-height: 36px;
    font-weight: 500;
    font-size: 19.3px;
}

.meta-col span {
    line-height: 36px;
    color: #5f6368;
}

.col-location {
    width: 293px;
}

.col-class {
    width: 154px;
}

.col-access {
    width: 214px;
}

.meta-col .public {
    display: flex;
    align-items: center;
    gap: 5px;
}

.tabs {
    height: 55px;
    margin-top: 38px;
    display: flex;
    border-bottom: 1px solid #dadce0;
}

.tab-arrow {
    display: flex;
    align-items: center;
    justify-content: center;
}

.tab-arrow.left {
    width: 53px;
    fill: #80868b;
}

.tab-arrow.right {
    width: 53px;
    fill: #202124;
}

.tab-list {
    width: 1405px;
    height: 55px;
    display: flex;
    overflow: hidden;
    box-shadow: -3px 0 4px -3px rgba(60, 64, 67, .3);
}

.tab {
    height: 55px;
    flex: none;
    display: flex;
    align-items: center;
    padding: 0 36px;
    font-weight: 500;
    color: #5f6368;
}

.tab.active {
    color: #3367d6;
    border-bottom: 3px solid #3367d6;
    padding-top: 3px;
}

.new-badge {
    width: 50px;
    height: 30px;
    margin-left: 10px;
    display: flex;
    align-items: center;
    justify-content: center;
    border-radius: 3px;
    background: #3367d6;
    color: #fff;
    font-style: normal;
}

.crumbs {
    height: 48px;
    margin-top: 30px;
    display: flex;
    align-items: center;
    padding-left: 41px;
}

.crumb-root {
    color: #5f6368;
}

.crumbs svg {
    margin: 0 9px 0 7px;
    fill: #202124;
}

.crumbs svg:last-child {
    margin: 0 0 0 8px;
    fill: #000;
}

.actions {
    height: 68px;
    display: flex;
    align-items: center;
    gap: 48px;
    padding: 0 0 4px 47px;
    border-bottom: 1px solid #dadce0;
    font-weight: 500;
    color: #3367d6;
}

.action.transfer {
    margin-right: 7px;
}

.action.off {
    color: #5f6368;
}

.action-caret {
    display: inline-block;
    margin-left: 12px;
    vertical-align: 3px;
    border-left: 6px solid transparent;
    border-right: 6px solid transparent;
    border-top: 6px solid #3367d6;
}

.filter-bar {
    height: 60px;
    display: flex;
    align-items: center;
    padding: 0 31px 0 29px;
}

.vsep {
    width: 1px;
    height: 36px;
    flex: none;
    background: #e8eaed;
}

.prefix {
    width: 263px;
    white-space: nowrap;
}

.filter-icon {
    margin-left: 28px;
    fill: #202124;
}

.filter-word {
    margin-left: 5px;
    font-weight: 500;
    font-size: 18.5px;
}

.filter-input {
    flex: 1;
    margin-left: 20px;
    color: #5f6368;
}

.toggle {
    position: relative;
    width: 54px;
    height: 22px;
    margin: 0 12px;
    border-radius: 11px;
    background: linear-gradient(to right, transparent 14px, #e0e0e0 14px);
}

.toggle-knob {
    position: absolute;
    left: 0;
    top: -4px;
    width: 30px;
    height: 30px;
    border-radius: 50%;
    background: #5f6368;
    box-shadow: 0 1px 3px rgba(0, 0, 0, .4);
}

.toggle-knob::after {
    content: "";
    position: absolute;
    left: 8px;
    top: 14px;
    width: 14px;
    height: 2px;
    background: #fff;
}

.toggle-label {
    width: 179px;
    white-space: nowrap;
}

.columns-icon {
    margin-left: 32px;
}

.row {
    display: grid;
    grid-template-columns: 95px 365px 151px 131px 260px 158px 260px 4px 87px;
    height: 43px;
    border-bottom: 1px solid #dadce0;
    color: #5f6368;
}

.row-head {
    height: 44px;
    border-top: 1px solid #dadce0;
    background: #f5f5f5;
    font-weight: 500;
    font-size: 18px;
}

.cell {
    min-width: 0;
    display: flex;
    align-items: center;
    white-space: nowrap;
}

.cell:first-child {
    padding-left: 29px;
}

.row-head .cell:not(:first-child) {
    padding-bottom: 2px;
}

.cell.sep {
    padding-left: 24px;
    border-left: 1px solid #dadce0;
}

.cell.cut {
    overflow: hidden;
}

.cell.fixed {
    justify-content: flex-start;
    gap: 14px;
    padding-left: 10px;
    border-left: 1px solid #e3e3e3;
    fill: #000;
}

.checkbox {
    width: 24px;
    height: 24px;
    border: 3px solid #000;
    border-radius: 3px;
    background: #fff;
}

.row-head .checkbox {
    background: transparent;
}

.created-help {
    margin-left: 9px;
    margin-top: 2px;
    fill: #000;
}

.name svg {
    margin-right: 7px;
    margin-left: 1px;
}

.name a {
    margin-top: 2px;
    color: #3367d6;
}

.snackbar {
    position: absolute;
    left: 854px;
    bottom: 0;
    width: 645px;
    height: 11px;
    background: #000;
    border-radius: 2px 2px 0 0;
}

/* windows taskbar */
.taskbar {
    height: 60px;
    flex: none;
    display: flex;
    background: #1c1c1c;
    color: #fff;
    font-family: "Open Sans", sans-serif;
}

.task-sys {
    width: 72px;
    display: flex;
    align-items: center;
    justify-content: center;
}

.task-sys:nth-child(3) {
    width: 75px;
}

.task-app {
    position: relative;
    width: 75px;
    display: flex;
    align-items: center;
    justify-content: center;
}

.task-app.open::after {
    content: "";
    position: absolute;
    left: 7px;
    right: 7px;
    bottom: 0;
    height: 3px;
    background: #76b9ed;
}

.task-app.active {
    background: #4a4a4a;
}

.task-app.active::after {
    left: 0;
    right: 0;
}

.task-badge {
    position: absolute;
    right: 8px;
    bottom: 4px;
    width: 25px;
    height: 25px;
    display: flex;
    align-items: center;
    justify-content: center;
    border: 1px solid #999;
    border-radius: 50%;
    background: #333;
    color: #fff;
    font-size: 16px;
    font-weight: 600;
}

.task-badge.red {
    border: 0;
    background: #e0454a;
    font-size: 14px;
}

.task-avatar {
    position: absolute;
    right: 12px;
    bottom: 6px;
    width: 24px;
    height: 24px;
    display: flex;
    align-items: center;
    justify-content: center;
    border-radius: 50%;
    font-size: 13px;
    font-weight: 600;
}

.task-avatar.purple {
    background: #7b1fa2;
}

.task-avatar.grey {
    background: #7d949f;
}

.zoom-icon {
    width: 36px;
    height: 36px;
    display: flex;
    align-items: center;
    justify-content: center;
    border-radius: 13px;
    background: #0b5cff;
    font-family: Roboto, sans-serif;
    font-size: 10.500px;
    font-weight: 500;
}

.word-w {
    font: 700 13px Roboto, sans-serif;
    fill: #fff;
    text-anchor: middle;
}

.tray {
    margin-left: auto;
    display: flex;
    align-items: center;
}

.tray-icon {
    width: 35.800px;
    display: flex;
    justify-content: center;
}

.clock {
    width: 116px;
    display: flex;
    flex-direction: column;
    align-items: center;
    gap: 5px;
    font-size: 17.6px;
    line-height: 22px;
}

.notify {
    position: relative;
    width: 60px;
    display: flex;
    justify-content: center;
}

.notify-badge {
    right: 6px;
    bottom: -11px;
}

.desk-peek {
    width: 7px;
    height: 60px;
    margin-left: 12px;
    border-left: 2px solid #777;
}
```
